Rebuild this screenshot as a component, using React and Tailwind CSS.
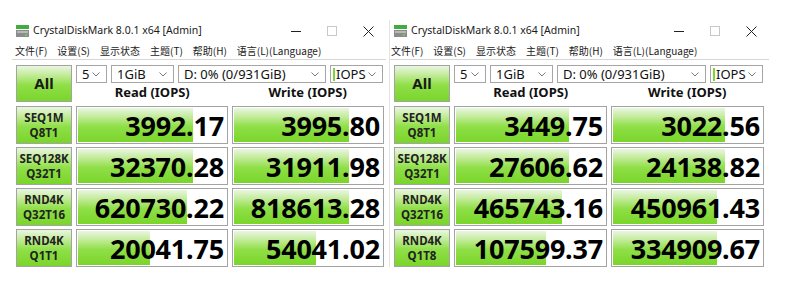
const GREEN = 'bg-[linear-gradient(to_bottom,#eaf6e2_0%,#c4ec9c_25%,#8fdf47_55%,#7ad52a_100%)]';

const windows = [
  {
    title: 'CrystalDiskMark 8.0.1 x64 [Admin]',
    wrap: 'ml-[12px] w-[374px]',
    menuPad: 'pl-[3px] gap-[10px]',
    titleW: 'w-[249px]',
    colW: 'grid-cols-[56px_152px_152px]',
    drops: ['w-[31px]', 'w-[63px]', 'w-[148px]', 'w-[53px]'],
    rows: [
      { l1: 'SEQ1M', l2: 'Q8T1', read: '3992.17', rw: 117, write: '3995.80', ww: 117 },
      { l1: 'SEQ128K', l2: 'Q32T1', read: '32370.28', rw: 117, write: '31911.98', ww: 117 },
      { l1: 'RND4K', l2: 'Q32T16', read: '620730.22', rw: 111, write: '818613.28', ww: 117 },
      { l1: 'RND4K', l2: 'Q1T1', read: '20041.75', rw: 74, write: '54041.02', ww: 84 },
    ],
  },
  {
    title: 'CrystalDiskMark 8.0.1 x64 [Admin]',
    wrap: 'ml-[3px] w-[380px] border-l border-[#e4e4e4]',
    menuPad: 'pl-[1px] gap-[10px]',
    titleW: 'w-[250px]',
    colW: 'grid-cols-[56px_153px_153px]',
    drops: ['w-[32px]', 'w-[63px]', 'w-[149px]', 'w-[53px]'],
    rows: [
      { l1: 'SEQ1M', l2: 'Q8T1', read: '3449.75', rw: 115, write: '3022.56', ww: 114 },
      { l1: 'SEQ128K', l2: 'Q32T1', read: '27606.62', rw: 115, write: '24138.82', ww: 114 },
      { l1: 'RND4K', l2: 'Q32T16', read: '465743.16', rw: 108, write: '450961.43', ww: 106 },
      { l1: 'RND4K', l2: 'Q1T8', read: '107599.37', rw: 92, write: '334909.67', ww: 106 },
    ],
  },
];

const menu = ['文件(F)', '设置(S)', '显示状态', '主题(T)', '帮助(H)', '语言(L)(Language)'];

function AppIcon() {
  return (
    <svg width="13" height="12" viewBox="0 0 13 12" className="shrink-0">
      <rect x="0" y="0" width="13" height="4" fill="#3fae3f" />
      <rect x="0" y="5" width="13" height="7" fill="#8c8c8c" />
      <rect x="1" y="6" width="11" height="2" fill="#b8b8b8" />
      <rect x="9" y="9" width="2" height="2" fill="#6ccf4a" />
    </svg>
  );
}

function Chevron() {
  return (
    <svg width="8" height="5" viewBox="0 0 8 5" className="shrink-0">
      <path d="M0.5 0.5L4 4L7.5 0.5" fill="none" stroke="#7a7a7a" strokeWidth="1" />
    </svg>
  );
}

function Dropdown({ w, text, mark }) {
  return (
    <div className={`${w} h-[18px] flex items-center border border-[#a6a6a6] bg-white pl-[5px] pr-[6px]`}>
      {mark && <span className="w-[2px] h-[13px] bg-[#7ed43a] mr-[1px] -ml-[3px]" />}
      <span className="flex-1 text-[13px] leading-[16px] text-[#111] whitespace-nowrap">{text}</span>
      <Chevron />
    </div>
  );
}

function Result({ value, width }) {
  return (
    <div className="h-[38px] border border-[#a3a3a3] bg-white p-[1px]">
      <div
        className={`h-full ${GREEN} bg-no-repeat flex items-center justify-end pr-[2px]`}
        style={{ backgroundSize: `${width - 2}px 100%` }}
      >
        <span className="font-['Noto_Sans',sans-serif] font-bold text-[27px] leading-none tracking-[-0.2px] tabular-nums text-black">
          {value}
        </span>
      </div>
    </div>
  );
}

function Label({ l1, l2 }) {
  return (
    <div className={`h-[38px] border border-[#a3a3a3] ${GREEN} flex flex-col items-center justify-center gap-[3px]`}>
      <span className="text-[11.5px] leading-none font-bold text-[#222]">{l1}</span>
      <span className="text-[11.5px] leading-none font-bold text-[#222]">{l2}</span>
    </div>
  );
}

function Window({ cfg }) {
  return (
    <div className={`${cfg.wrap} shrink-0`}>
      {/* Title bar */}
      <div className="h-[22px] flex items-center pl-[4px]">
        <AppIcon />
        <span className={`${cfg.titleW} ml-[4px] text-[10.5px] text-[#1a1a1a] whitespace-nowrap`}>{cfg.title}</span>
        <div className="flex items-center shrink-0">
          <div className="w-[36px] flex justify-center">
            <div className="w-[10px] h-[1px] bg-[#222]" />
          </div>
          <div className="w-[36px] flex justify-center">
            <div className="w-[10px] h-[10px] border border-[#c8c8c8]" />
          </div>
          <div className="w-[36px] flex justify-center">
            <svg width="11" height="11" viewBox="0 0 11 11">
              <path d="M0.5 0.5L10.5 10.5M10.5 0.5L0.5 10.5" stroke="#222" strokeWidth="1" />
            </svg>
          </div>
        </div>
      </div>

      {/* Menu */}
      <div className={`h-[18px] flex items-center ${cfg.menuPad} border-b border-[#d6d6d6] font-['Noto_Sans_CJK_SC',sans-serif] text-[10px] text-[#1a1a1a]`}>
        {menu.map((m) => (
          <span key={m} className="whitespace-nowrap">{m}</span>
        ))}
      </div>

      {/* Controls + headers */}
      <div className={`grid ${cfg.colW} gap-x-[4px] pl-[4px] pt-[5px]`}>
        <div className={`h-[37px] border border-[#a3a3a3] ${GREEN} flex items-center justify-center`}>
          <span className="text-[15px] font-bold text-[#1a1a1a] leading-none">All</span>
        </div>
        <div className="col-span-2 flex flex-col">
          <div className="flex gap-[4px]">
            <Dropdown w={cfg.drops[0]} text="5" />
            <Dropdown w={cfg.drops[1]} text="1GiB" />
            <Dropdown w={cfg.drops[2]} text="D: 0% (0/931GiB)" />
            <Dropdown w={cfg.drops[3]} text="IOPS" mark />
          </div>
          <div className="flex gap-[3px] h-[19px] items-center">
            <div className="flex-1 text-center text-[13px] font-bold text-[#111] leading-none">Read (IOPS)</div>
            <div className="flex-1 text-center text-[13px] font-bold text-[#111] leading-none">Write (IOPS)</div>
          </div>
        </div>
      </div>

      {/* Results */}
      <div className={`grid ${cfg.colW} gap-x-[4px] gap-y-[3px] pl-[4px] pt-[4px]`}>
        {cfg.rows.map((r, i) => (
          <div key={i} className="contents">
            <Label l1={r.l1} l2={r.l2} />
            <Result value={r.read} width={r.rw} />
            <Result value={r.write} width={r.ww} />
          </div>
        ))}
      </div>
    </div>
  );
}

export default function App() {
  return (
    <div className="w-[794px] h-[289px] bg-white overflow-hidden font-['Noto_Sans','Liberation_Sans',sans-serif]">
      <div className="flex pt-[20px]">
        {windows.map((w, i) => (
          <Window key={i} cfg={w} />
        ))}
      </div>
    </div>
  );
}
